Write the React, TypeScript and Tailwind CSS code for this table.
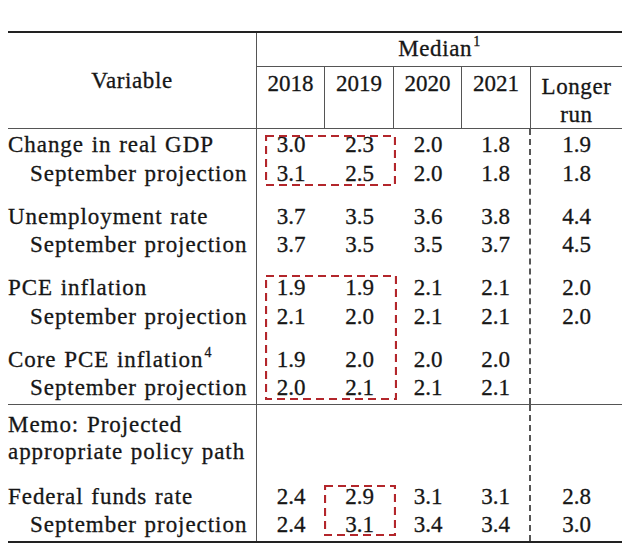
import React from "react";

type Row = { label: string; indent?: boolean; sup?: string; v: string[] };
type Group = { h: string; mt: string; rows: Row[] };
type Section = { pt: string; pb: string; border: string; groups: Group[] };

const TRACK = "grid grid-cols-[249px_68px_69px_68px_69px_91px]";
const A_H = "h-[28.5px] leading-[28.5px]";

const sections: Section[] = [
  {
    pt: "pt-[2px]",
    pb: "pb-[1.5px]",
    border: "border-b-[1.5px] border-[#555]",
    groups: [
      {
        h: A_H,
        mt: "",
        rows: [
          { label: "Change in real GDP", v: ["3.0", "2.3", "2.0", "1.8", "1.9"] },
          { label: "September projection", indent: true, v: ["3.1", "2.5", "2.0", "1.8", "1.8"] },
        ],
      },
      {
        h: A_H,
        mt: "mt-[14.5px]",
        rows: [
          { label: "Unemployment rate", v: ["3.7", "3.5", "3.6", "3.8", "4.4"] },
          { label: "September projection", indent: true, v: ["3.7", "3.5", "3.5", "3.7", "4.5"] },
        ],
      },
      {
        h: A_H,
        mt: "mt-[14.5px]",
        rows: [
          { label: "PCE inflation", v: ["1.9", "1.9", "2.1", "2.1", "2.0"] },
          { label: "September projection", indent: true, v: ["2.1", "2.0", "2.1", "2.1", "2.0"] },
        ],
      },
      {
        h: A_H,
        mt: "mt-[14.5px]",
        rows: [
          { label: "Core PCE inflation", sup: "4", v: ["1.9", "2.0", "2.0", "2.0", ""] },
          { label: "September projection", indent: true, v: ["2.0", "2.1", "2.1", "2.1", ""] },
        ],
      },
    ],
  },
  {
    pt: "pt-[6px]",
    pb: "pb-[2px]",
    border: "",
    groups: [
      {
        h: "h-[27px] leading-[27px]",
        mt: "",
        rows: [
          { label: "Memo: Projected", v: ["", "", "", "", ""] },
          { label: "appropriate policy path", v: ["", "", "", "", ""] },
        ],
      },
      {
        h: "h-[28px] leading-[28px]",
        mt: "mt-[17.5px]",
        rows: [
          { label: "Federal funds rate", v: ["2.4", "2.9", "3.1", "3.1", "2.8"] },
          { label: "September projection", indent: true, v: ["2.4", "3.1", "3.4", "3.4", "3.0"] },
        ],
      },
    ],
  },
];

function DashBox({ cls, w, h }: { cls: string; w: number; h: number }) {
  return (
    <svg className={`absolute ${cls}`} width={w} height={h} viewBox={`0 0 ${w} ${h}`}>
      <rect
        x={1}
        y={1}
        width={w - 2}
        height={h - 2}
        fill="none"
        stroke="#b3262b"
        strokeWidth={2.2}
        strokeDasharray="8 5"
      />
    </svg>
  );
}

function Body({ s }: { s: Section }) {
  const cols = [0, 1, 2, 3, 4, 5];
  return (
    <div className={`${TRACK} ${s.border}`}>
      {cols.map((c) => (
        <div
          key={c}
          className={`flex flex-col ${s.pt} ${s.pb} ${
            c === 0
              ? "border-r-[1.5px] border-[#555]"
              : c === 4
              ? "border-r-2 border-dashed border-[#555] text-center"
              : "text-center"
          }`}
        >
          {s.groups.map((g, gi) => (
            <div key={gi} className={`flex flex-col ${g.mt}`}>
              {g.rows.map((r, ri) =>
                c === 0 ? (
                  <div
                    key={ri}
                    className={`${g.h} whitespace-nowrap tracking-[0.95px] [word-spacing:1px] ${
                      r.indent ? "pl-[22px]" : ""
                    }`}
                  >
                    {r.label}
                    {r.sup ? (
                      <sup className="text-[14px] -top-[10px] ml-[1px] tracking-normal">{r.sup}</sup>
                    ) : null}
                  </div>
                ) : (
                  <div key={ri} className={`${g.h}`}>
                    {r.v[c - 1]}
                  </div>
                )
              )}
            </div>
          ))}
        </div>
      ))}
    </div>
  );
}

export default function App() {
  const years = ["2018", "2019", "2020", "2021"];
  return (
    <div className="w-[625px] h-[553px] bg-white overflow-hidden font-[family-name:'Liberation_Serif','Times_New_Roman',serif] text-[23px] text-[#161616] [-webkit-text-stroke:0.3px_#161616]">
      <div className="relative ml-[8px] mt-[31px] w-[614px] border-t-2 border-b-2 border-[#222]">
        <div className={`${TRACK} grid-rows-[34px_61px] border-b border-[#555]`}>
          <div className="row-span-2 border-r-[1.5px] border-[#555] flex items-center justify-center pt-[2px] tracking-[0.6px]">
            Variable
          </div>
          <div className="col-span-5 border-b border-[#555] flex items-center justify-center tracking-[0.6px]">
            <span>
              Median<sup className="text-[14px] -top-[10px] ml-[1px]">1</sup>
            </span>
          </div>
          {years.map((y) => (
            <div key={y} className="border-r border-[#555] text-center leading-[28px] pt-[2.5px]">
              {y}
            </div>
          ))}
          <div className="text-center leading-[28px] pt-[5.5px] tracking-[0.6px]">
            <div>Longer</div>
            <div>run</div>
          </div>
        </div>
        {sections.map((s, i) => (
          <Body key={i} s={s} />
        ))}
        <DashBox cls="left-[257px] top-[102px]" w={131} h={51} />
        <DashBox cls="left-[257px] top-[242px]" w={132} h={125} />
        <DashBox cls="left-[316px] top-[452px]" w={72} h={51} />
      </div>
    </div>
  );
}
